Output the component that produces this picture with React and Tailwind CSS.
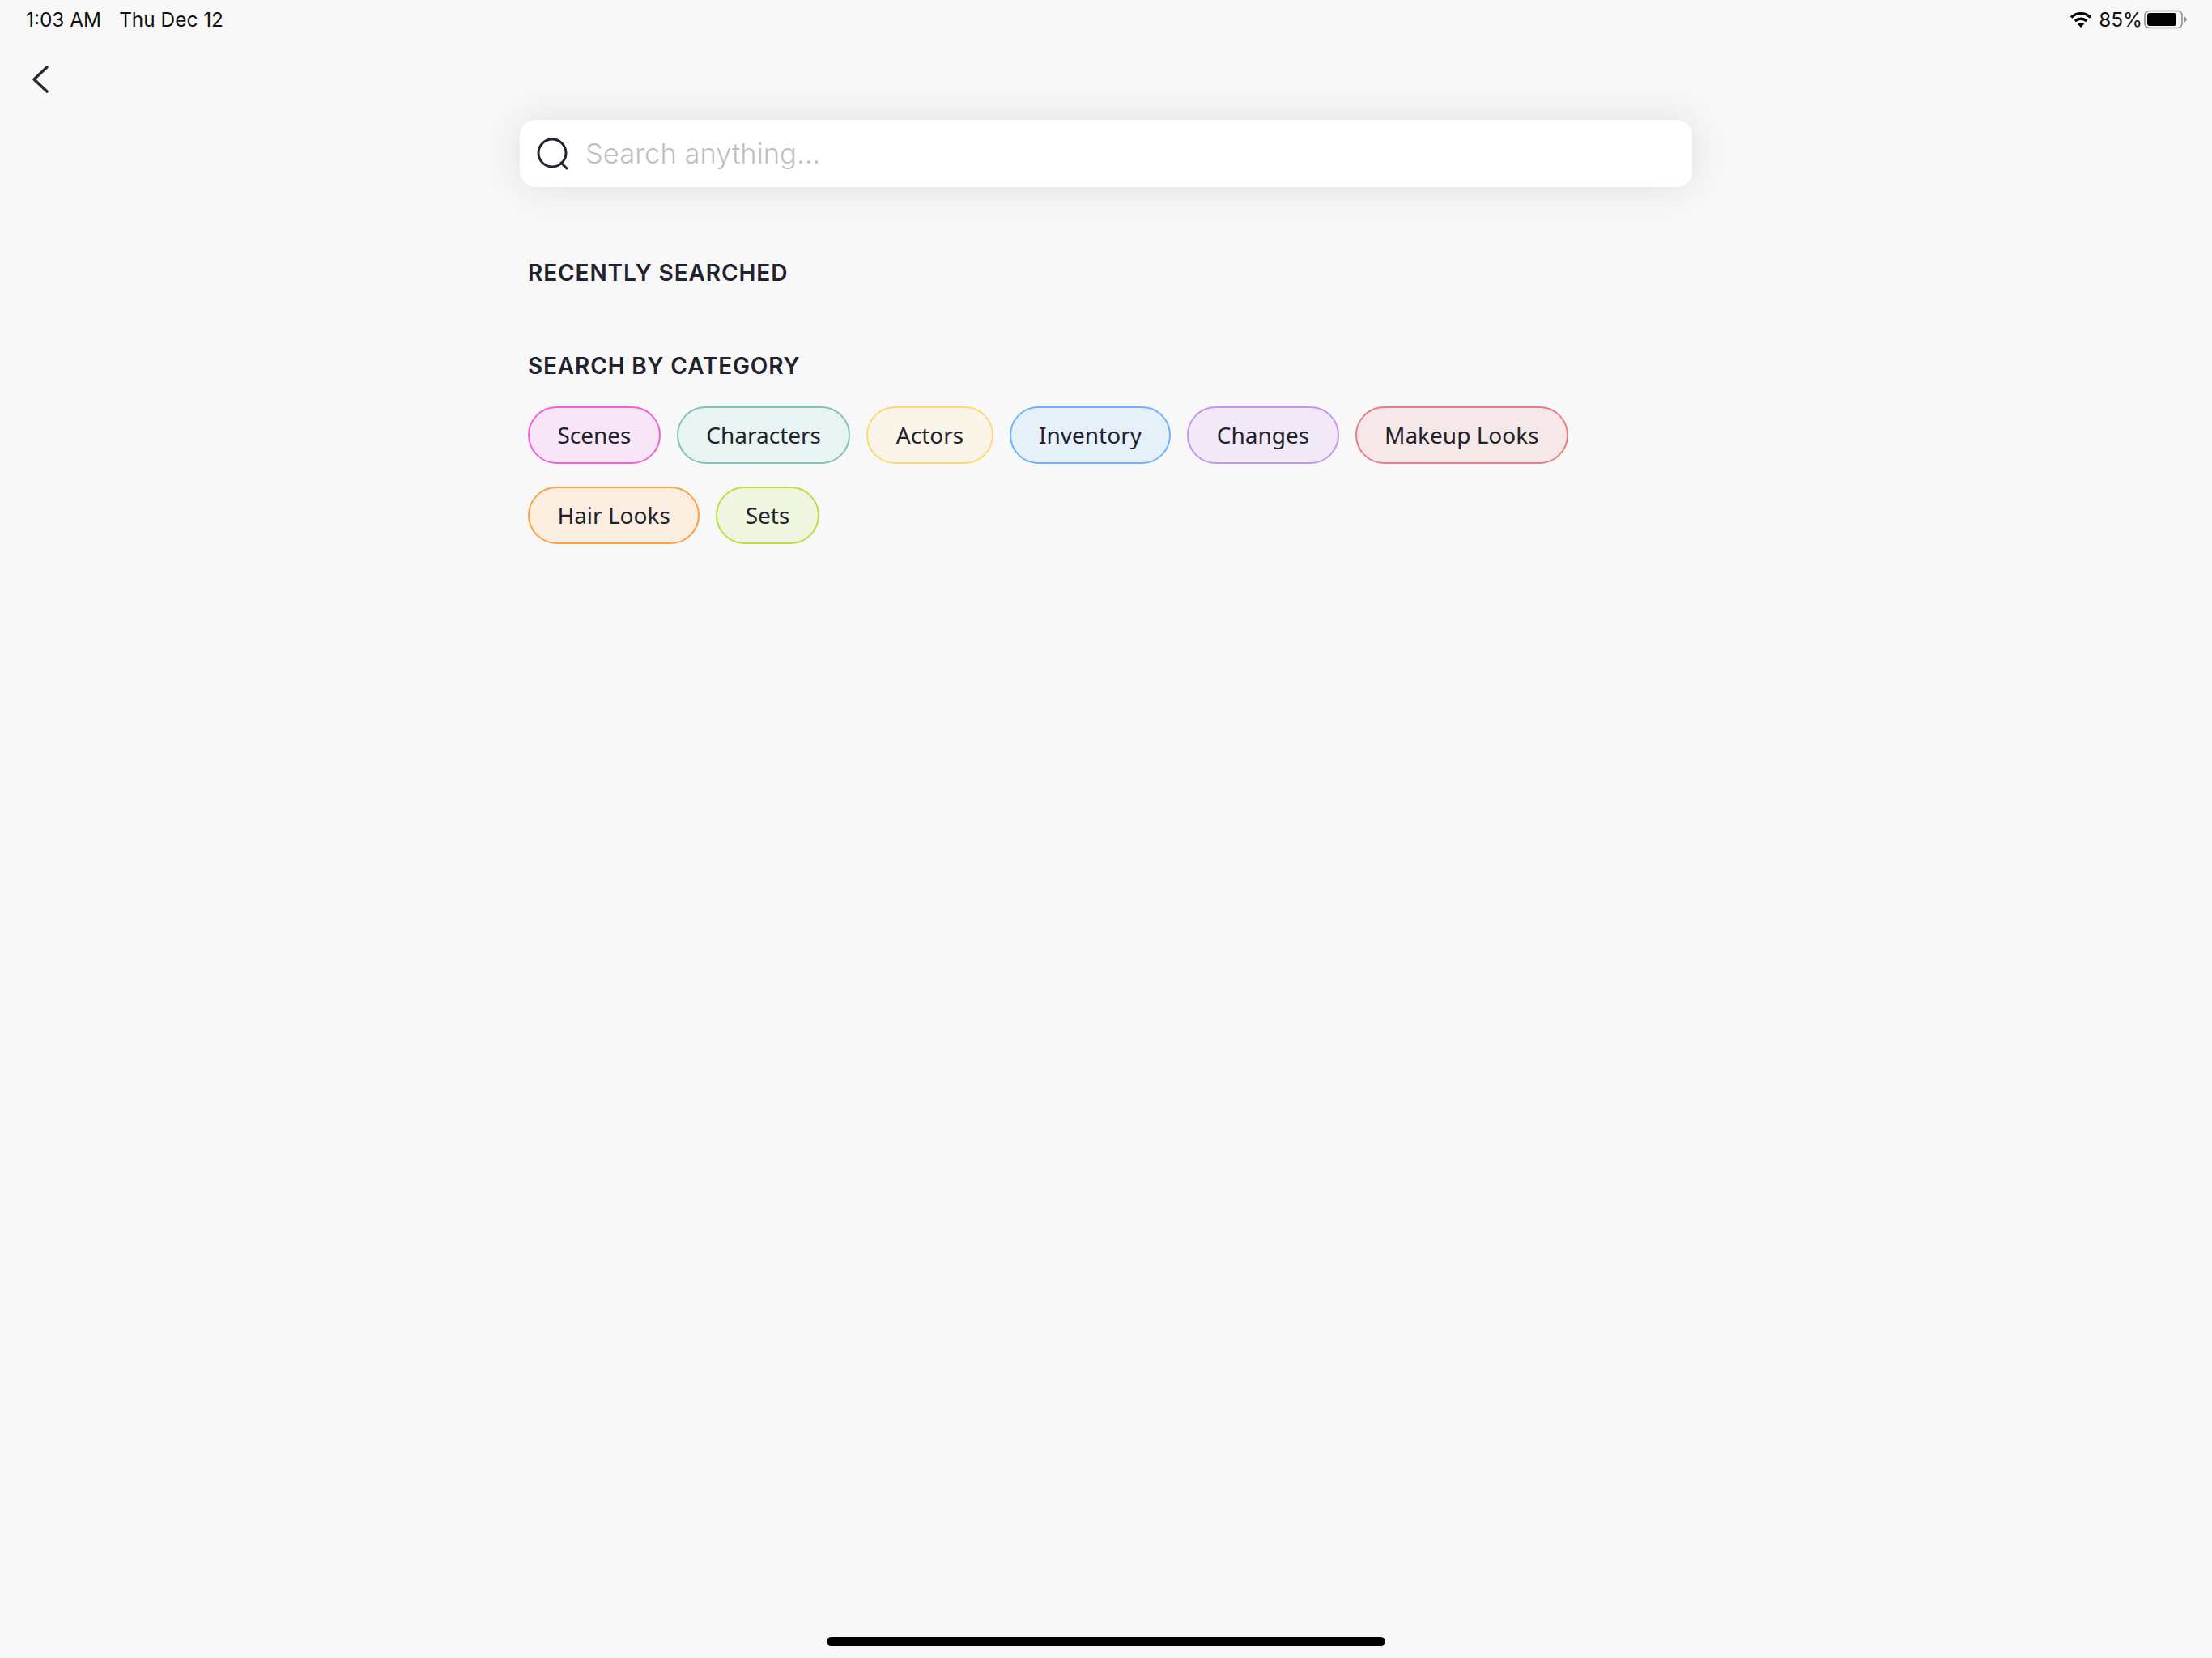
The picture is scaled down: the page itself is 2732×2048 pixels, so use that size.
const sans = "font-['Noto_Sans',sans-serif]";

const chips = [
  ["Scenes", "border-[#f65fdb] bg-[#f8e6f6]"],
  ["Characters", "border-[#7cc5bd] bg-[#e9f3f1]"],
  ["Actors", "border-[#ffd873] bg-[#fbf4e9]"],
  ["Inventory", "border-[#6cb2ff] bg-[#e6f0f9]"],
  ["Changes", "border-[#c594ee] bg-[#f1eaf6]"],
  ["Makeup Looks", "border-[#e97d86] bg-[#f6e8e8]"],
  ["Hair Looks", "border-[#ff9f3e] bg-[#fbeee1]"],
  ["Sets", "border-[#b8e03c] bg-[#eff5df]"],
];

function Wifi() {
  return (
    <svg width="28" height="22" viewBox="0 0 28 22" fill="none" className="block">
      <path d="M2 8.5C9 2 19 2 26 8.5" stroke="#000" strokeWidth="3.4" />
      <path d="M6.8 13C11 9.4 17 9.4 21.2 13" stroke="#000" strokeWidth="3.4" />
      <path d="M9.8 16.4C12.4 14.6 15.6 14.6 18.2 16.4L14 21Z" fill="#000" />
    </svg>
  );
}

function Battery() {
  return (
    <svg width="54" height="24" viewBox="0 0 54 24" fill="none" className="block">
      <rect x="1" y="1.5" width="46" height="21" rx="5.5" stroke="#8e8e8e" strokeWidth="1.6" />
      <rect x="4" y="4" width="36" height="16" rx="3" fill="#000" />
      <path d="M49.5 8.5C51.5 9 52.5 10.3 52.5 12C52.5 13.7 51.5 15 49.5 15.5Z" fill="#8e8e8e" />
    </svg>
  );
}

export default function App() {
  return (
    <div className="flex min-h-screen w-full flex-col bg-[#f8f8f8] text-[#22222e]">
      <div className="flex h-12 items-center justify-between pl-[32px] pr-[30px] font-['Inter',sans-serif] text-[24.4px] leading-none text-[#111]">
        <div className="flex gap-[22px]">
          <span>1:03 AM</span>
          <span>Thu Dec 12</span>
        </div>
        <div className="flex items-center">
          <Wifi />
          <span className="ml-[8px] mr-[2px]">85%</span>
          <Battery />
        </div>
      </div>

      <div className="flex h-[100px] items-start pl-[38px] pt-[32px]">
        <svg width="24" height="36" viewBox="0 0 24 36" fill="none" className="block">
          <path d="M20 3L4 18L20 33" stroke="#2a2a36" strokeWidth="3.6" strokeLinecap="round" strokeLinejoin="round" />
        </svg>
      </div>

      <div className="mx-auto flex w-[1448px] flex-col">
        <div className="flex h-[83px] items-center rounded-[20px] bg-white pl-[20px] shadow-[0_0_50px_rgba(0,0,0,0.1)]">
          <svg width="42" height="42" viewBox="0 0 42 42" fill="none" className="block shrink-0">
            <circle cx="20" cy="20" r="17" stroke="#22222e" strokeWidth="3" />
            <path d="M31 32L38 39" stroke="#22222e" strokeWidth="3" strokeLinecap="round" />
          </svg>
          <span className="ml-[19px] font-['Inter',sans-serif] text-[34.6px] font-light leading-none text-[#bfbfc1]">
            Search anything...
          </span>
        </div>

        <div className="px-[10px]">
          <h2 className="mt-[89px] font-['Inter',sans-serif] text-[28px] font-semibold leading-[34px] tracking-[0.9px]">
            RECENTLY SEARCHED
          </h2>
          <h2 className="mt-[81px] font-['Inter',sans-serif] text-[28px] font-semibold leading-[34px] tracking-[0.85px]">
            SEARCH BY CATEGORY
          </h2>
          <div className="mt-[33px] flex flex-wrap gap-x-[20px] gap-y-[28px]">
            {chips.map(([label, cls]) => (
              <div
                key={label}
                className={`flex h-[71px] items-center rounded-full border-2 px-[34.4px] pb-[1px] text-[28px] leading-none ${sans} ${cls}`}
              >
                {label}
              </div>
            ))}
          </div>
        </div>
      </div>

      <div className="mt-auto flex justify-center pb-[15px]">
        <div className="h-[11px] w-[690px] rounded-full bg-black" />
      </div>
    </div>
  );
}
